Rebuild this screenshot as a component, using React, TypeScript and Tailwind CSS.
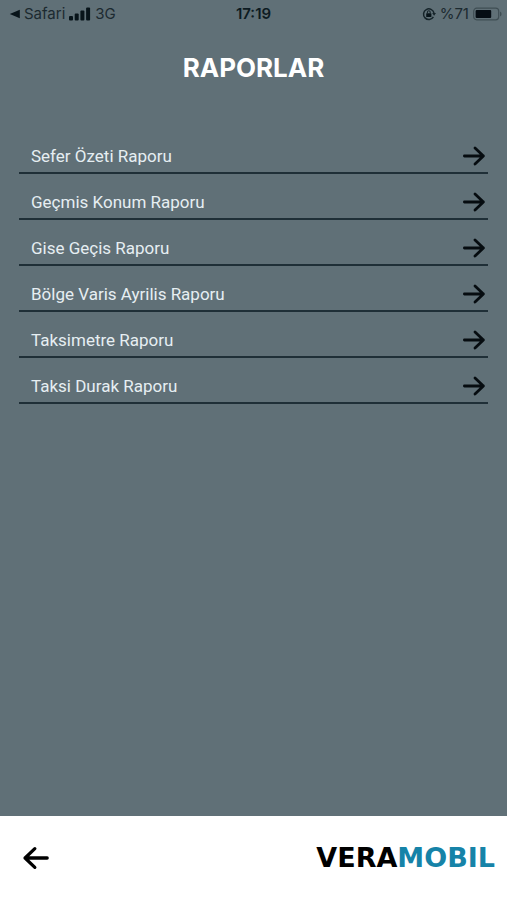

const reports = [
  'Sefer Özeti Raporu',
  'Geçmis Konum Raporu',
  'Gise Geçis Raporu',
  'Bölge Varis Ayrilis Raporu',
  'Taksimetre Raporu',
  'Taksi Durak Raporu',
]

const Arrow = ({ className }: { className: string }) => (
  <svg
    viewBox="0 0 24 20"
    fill="none"
    stroke="currentColor"
    strokeWidth="2.8"
    strokeLinecap="round"
    strokeLinejoin="round"
    aria-hidden="true"
    className={className}
  >
    <path d="M2.4 10H21.4M13 2L21.4 10L13 18" />
  </svg>
)

const StatusBar = () => (
  <header className="grid grid-cols-3 items-center h-7 px-1 text-[15px] text-[#1c2a30]">
    <div className="flex items-center gap-1 pl-1">
      <button className="flex items-center gap-1">
        <svg viewBox="0 0 12 10" className="w-3 h-[10px]" fill="#08141a" aria-hidden="true">
          <path d="M1.8 5L11.8 0.8V9.2Z" />
        </svg>
        Safari
      </button>
      <svg viewBox="0 0 22 14" className="w-[22px] h-[14px]" fill="#08141a" aria-hidden="true">
        <rect x="0" y="9" width="4" height="4.5" rx="1" />
        <rect x="5.7" y="6.5" width="4" height="7" rx="1" />
        <rect x="11.4" y="3.5" width="4" height="10" rx="1" />
        <rect x="17.1" y="0.5" width="4" height="13" rx="1" />
      </svg>
      <span>3G</span>
    </div>
    <span className="text-center font-semibold text-[#0d1b22]">17:19</span>
    <div className="flex items-center justify-end gap-1">
      <svg viewBox="0 0 14 14" className="size-[14px]" fill="none" stroke="#16242a" strokeWidth="1.5" aria-hidden="true">
        <path d="M11.4 9.9A5.3 5.3 0 1 1 12 6" />
        <path d="M10.2 6H14L12.1 8.8Z" fill="#16242a" stroke="none" />
        <rect x="4.2" y="6.2" width="5.2" height="3.8" rx="0.6" fill="#08141a" stroke="none" />
        <path d="M5.4 6.4V5.2A1.4 1.4 0 0 1 8.2 5.2V6.4" strokeWidth="1.1" />
      </svg>
      <span>%71</span>
      <svg viewBox="0 0 30 14" className="w-[30px] h-[14px]" fill="none" aria-hidden="true">
        <rect x="0.7" y="1.2" width="25" height="11.6" rx="3" stroke="#3f4e54" strokeWidth="1.2" />
        <rect x="2.6" y="3" width="15.6" height="8" rx="1" fill="#050d14" />
        <path d="M27 4.6V9.4A2.6 2.6 0 0 0 27 4.6Z" fill="#3f4e54" />
      </svg>
    </div>
  </header>
)

const App = () => {
  return (
    <div className="flex flex-col min-h-screen bg-[#607077] font-['Inter','Liberation_Sans',sans-serif]">
      <StatusBar />

      <main className="flex-1 px-[19px] pt-5">
        <h1 className="text-center text-[26px] leading-10 font-bold text-white">RAPORLAR</h1>

        <ul className="mt-10">
          {
            reports.map( report => (
              <li key={report}>
                <button className="flex w-full h-[46px] items-end justify-between border-b-2 border-[#1f2f37] pl-3 pr-[2px] pb-[6px] text-left font-['Roboto',sans-serif] text-[17px] leading-5 text-[#e6eef2]">
                  {report}
                  <Arrow className="w-6 h-5 text-[#060c10]" />
                </button>
              </li>
            ) )
          }
        </ul>
      </main>

      <footer className="flex h-[84px] items-center justify-between bg-white pl-[22px] pr-3">
        <button aria-label="Geri">
          <Arrow className="w-7 h-6 rotate-180 text-black" />
        </button>
        <p className="font-['DejaVu_Sans',sans-serif] text-[27px] leading-8 font-bold text-black">
          VERA<span className="text-[#1683a8]">MOBIL</span>
        </p>
      </footer>
    </div>
  )
}

export default App
